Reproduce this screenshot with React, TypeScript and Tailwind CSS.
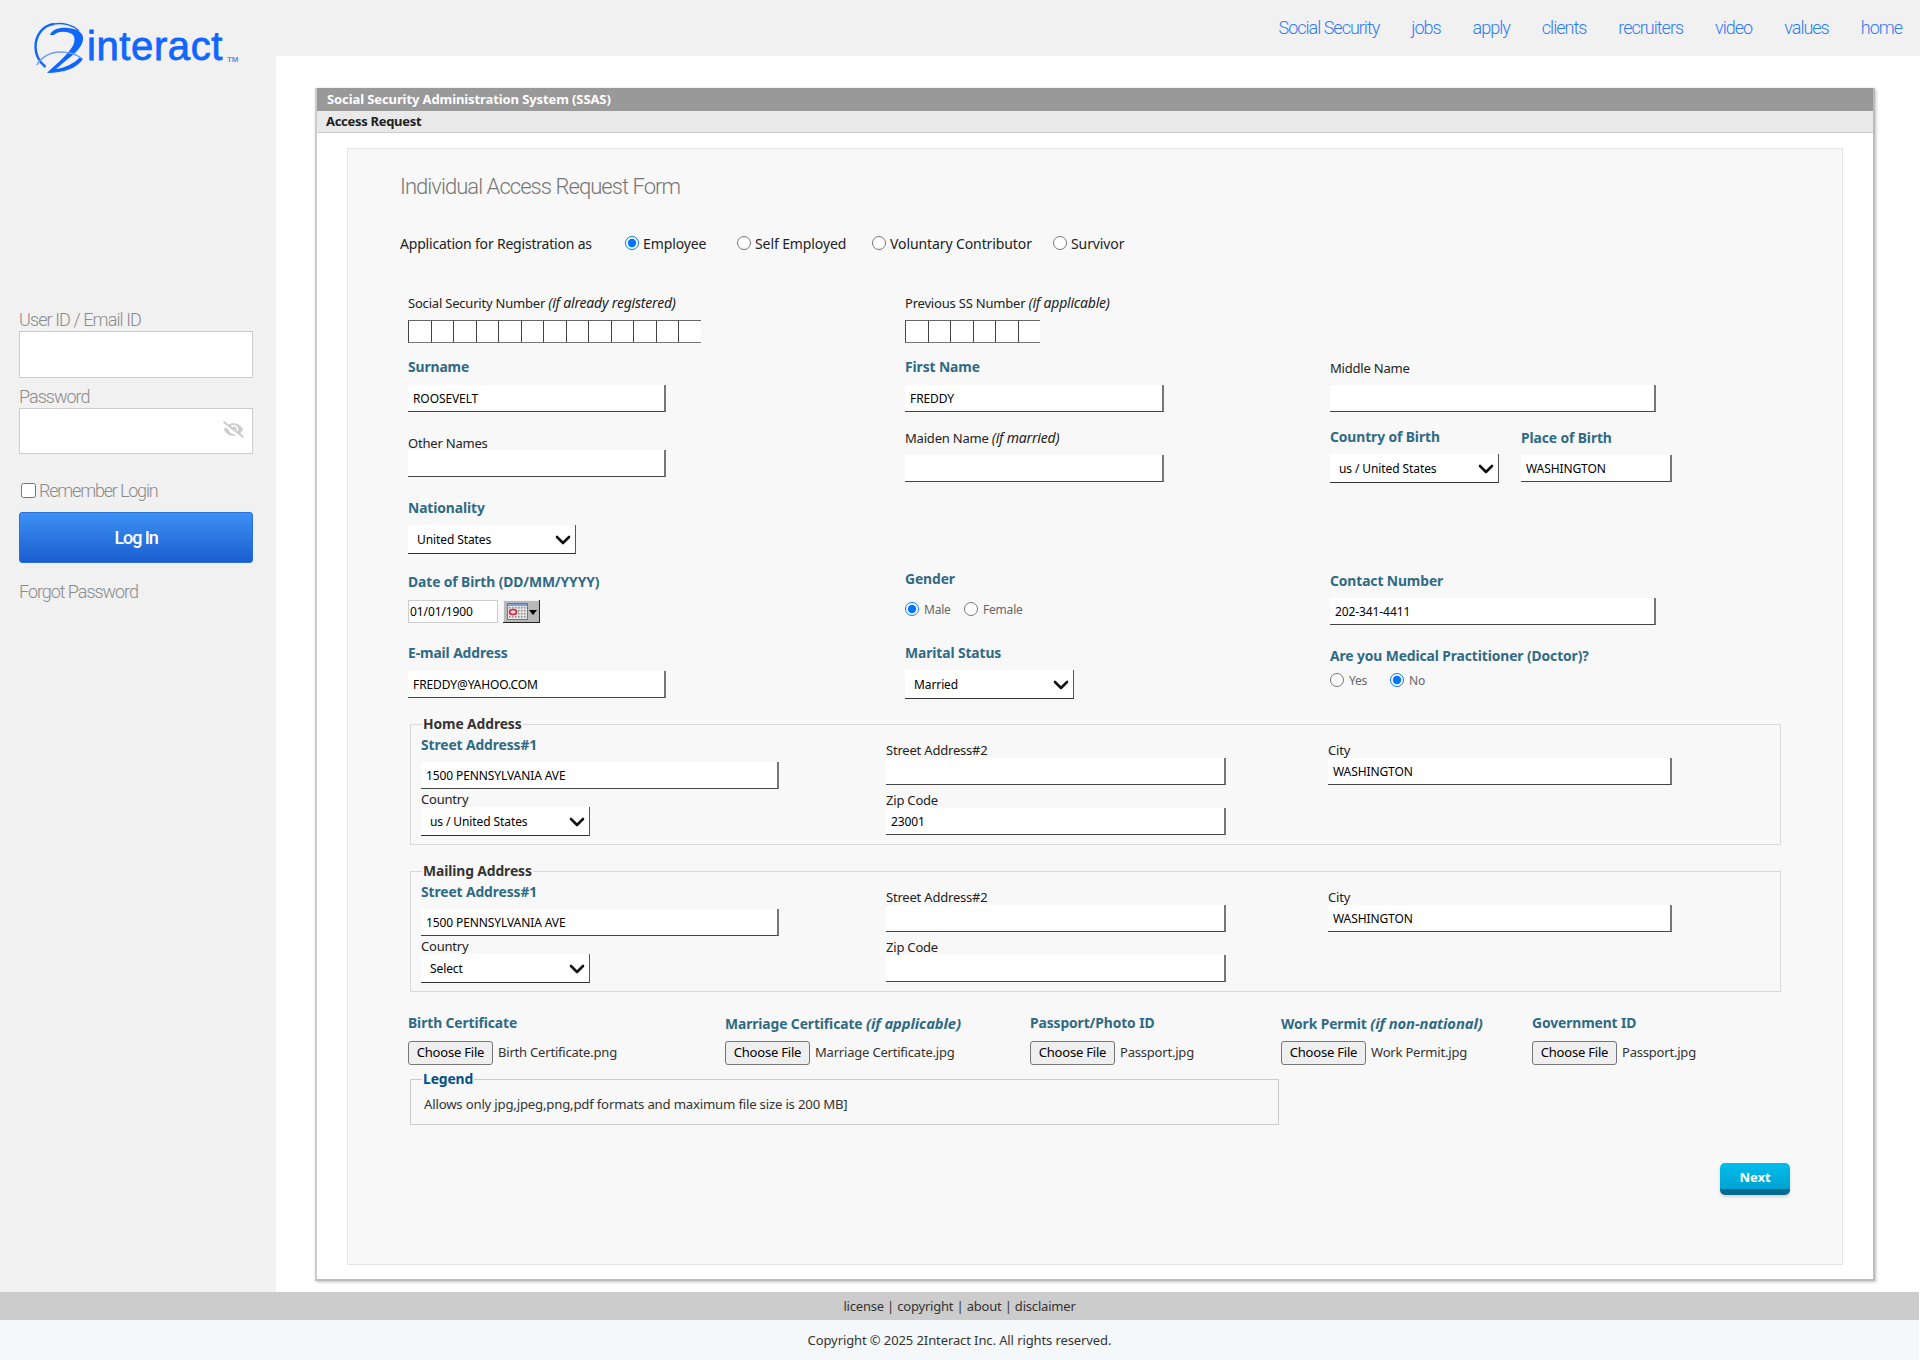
import type { ReactNode } from "react";
import { ChevronDown } from "lucide-react";
import { FaEyeSlash } from "react-icons/fa";

const sans = "font-['Noto_Sans','Liberation_Sans',sans-serif]";
const thin = "font-['Roboto','Liberation_Sans',sans-serif]";

const navItems = ["Social Security", "jobs", "apply", "clients", "recruiters", "video", "values", "home"];

function Label({ children, strong, className = "" }: { children: ReactNode; strong?: boolean; className?: string }) {
  return (
    <div
      className={`h-[16px] whitespace-nowrap ${
        strong
          ? "text-[13.85px] leading-[16px] font-bold tracking-[-0.1px] text-[#2f6a84]"
          : "text-[13px] leading-[18px] tracking-[-0.2px] text-[#222]"
      } ${className}`}
    >
      {children}
    </div>
  );
}

function TextBox({ width, value = "", className = "" }: { width: string; value?: string; className?: string }) {
  return (
    <input
      type="text"
      defaultValue={value}
      className={`block h-[27px] ${width} border-r-2 border-b border-r-[#777] border-b-[#444] bg-white px-[5px] text-[12px] tracking-[-0.1px] text-black outline-none ${className}`}
    />
  );
}

function Picker({ width, value, options, className = "" }: { width: string; value: string; options?: string[]; className?: string }) {
  return (
    <div className={`relative ${width} ${className}`}>
      <select
        defaultValue={value}
        className="block h-[29px] w-full appearance-none border-r border-b border-r-[#555] border-b-[#333] bg-white pt-px pl-[9px] text-[12px] tracking-[-0.1px] text-black outline-none"
      >
        {(options ?? [value]).map((o) => (
          <option key={o}>{o}</option>
        ))}
      </select>
      <ChevronDown size={24} strokeWidth={2.6} className="pointer-events-none absolute top-[3px] right-[1px] text-[#111]" />
    </div>
  );
}

function Radio({ name, label, checked, className = "", small }: { name: string; label: string; checked?: boolean; className?: string; small?: boolean }) {
  return (
    <label className={`flex items-center ${small ? "gap-[5px]" : "gap-[4px]"} ${className}`}>
      <input type="radio" name={name} defaultChecked={checked} className="m-0 h-[14px] w-[14px]" />
      <span className={small ? "pt-[2px]" : ""}>{label}</span>
    </label>
  );
}

function Boxes({ count }: { count: number }) {
  return (
    <div className="flex h-[23px]">
      {Array.from({ length: count }).map((_, i) => (
        <input
          key={i}
          maxLength={1}
          className="h-[23px] w-[22.5px] border-t border-b border-l border-t-[#666] border-b-[#777] border-l-[#444] bg-white outline-none"
        />
      ))}
    </div>
  );
}

function CalendarIcon() {
  return (
    <svg width="37" height="23" viewBox="0 0 37 23" className="ml-[5px] block">
      <rect x="0" y="0" width="37" height="23" fill="#b8b8b8" />
      <path d="M0 0h36v1H1v21H0z" fill="#f0f0f0" />
      <path d="M36 0h1v23H0v-1h36z" fill="#222" />
      <rect x="4.500" y="3.500" width="20" height="16" fill="#e2e2e2" stroke="#757575" />
      <rect x="5" y="4" width="19" height="2" fill="#7f9ed6" />
      <g fill="#8d8d8d">
        {[7, 10, 13, 16, 19, 22].map((x) =>
          [8, 11, 14, 17].map((y) => <rect key={`${x}-${y}`} x={x - 1} y={y - 1} width="1.500" height="1.500" />),
        )}
      </g>
      <ellipse cx="10" cy="12" rx="3.500" ry="2.500" fill="#f7d7da" stroke="#e2203a" strokeWidth="1.500" />
      <path d="M26 10h8l-4 5z" fill="#000" />
    </svg>
  );
}

function Logo() {
  return (
    <div className="flex h-[56px] items-start pt-[18px] pl-[30px]">
      <svg width="60" height="60" viewBox="0 0 60 60" className="shrink-0">
        <path d="M24 6C12 7.500 5.500 18 5.500 29c0 9 4 15 10 20" fill="none" stroke="#1166ff" strokeWidth="2.400" />
        <path d="M24 6c9-1.500 19 1 25 7" fill="none" stroke="#1166ff" strokeWidth="1.400" />
        <path
          d="M20 17C22 11 30 9 38 10 48 11 54 15 53 22 52 30 42 38 33 45 30 48 27 50 26 51 34 50 44 46 50 39L53 41C47 50 34 55 17 55 24 48 34 40 40 32 46 25 46 17 40 15 34 13 28 13 24 17Z"
          fill="#1166ff"
        />
        <path d="M7 47c3-7 13-13 23-13 9 0 16 2 21 6" fill="none" stroke="#6a9cff" strokeWidth="1.600" />
      </svg>
      <span className="-ml-[3px] mt-[8px] text-[40px] leading-[40px] tracking-[0.6px] text-[#1166ff] [-webkit-text-stroke:0.8px_#1166ff] font-['Liberation_Sans',sans-serif]">
        interact
      </span>
      <span className="mt-[38px] ml-[4px] text-[8px] leading-[8px] font-bold text-[#5b8fe8] font-['Liberation_Sans',sans-serif]">TM</span>
    </div>
  );
}

function Sidebar() {
  return (
    <aside className={`w-[276px] shrink-0 bg-[#f1f1f1] px-[19px] text-[#8b8b8b] ${thin}`}>
      <div className="-mx-[19px] h-[310px]">
        <Logo />
      </div>
      <div className="h-[20px] text-[18px] leading-[20px] font-light tracking-[-0.9px]">User ID / Email ID</div>
      <input type="text" className="mt-[1px] block h-[47px] w-[234px] border border-[#ccc] bg-white outline-none" />
      <div className="mt-[9px] h-[20px] text-[18px] leading-[20px] font-light tracking-[-1px]">Password</div>
      <div className="relative mt-[1px] w-[234px]">
        <input type="password" className="block h-[46px] w-full border border-[#ccc] bg-white outline-none" />
        <FaEyeSlash className="absolute top-[11px] right-[9px] text-[21px] text-[#cccccc]" />
      </div>
      <label className="mt-[26px] flex h-[20px] items-center gap-[3px] pl-[2px] text-[18px] font-light tracking-[-1.2px]">
        <input type="checkbox" className="m-0 h-[15px] w-[15px]" />
        Remember Login
      </label>
      <button
        type="button"
        className="mt-[12px] h-[51px] w-[234px] rounded-[3px] border border-[#2a6fdc] bg-gradient-to-b from-[#3d90f4] to-[#1b5ecf] text-[18px] font-medium tracking-[-1.100px] text-white"
      >
        Log In
      </button>
      <div className="mt-[19px] h-[20px] text-[18px] leading-[20px] font-light tracking-[-1.050px]">Forgot Password</div>
    </aside>
  );
}

function AddressBlock({
  title,
  street,
  country,
  zip,
  city,
  options,
  className = "",
}: {
  title: string;
  street: string;
  country: string;
  zip: string;
  city: string;
  options: string[];
  className?: string;
}) {
  return (
    <fieldset className={`ml-[2px] h-[129px] w-[1371px] border border-[#d9d9d9] ${className}`}>
      <legend className="ml-[11px] h-[16px] px-px text-[13.85px] leading-[16px] font-bold tracking-[-0.1px] text-[#333]">{title}</legend>
      <div className="grid grid-cols-[465px_442px_1fr] pl-[10px]">
        <div className="pt-[5px]">
          <Label strong>Street Address#1</Label>
          <TextBox width="w-[358px]" value={street} className="mt-[9px]" />
          <Label className="mt-[1px]">Country</Label>
          <Picker width="w-[169px]" value={country} options={options} className="mt-[1px]" />
        </div>
        <div className="pt-[9px]">
          <Label>Street Address#2</Label>
          <TextBox width="w-[340px]" className="mt-[1px]" />
          <Label className="mt-[6px]">Zip Code</Label>
          <TextBox width="w-[340px]" value={zip} className="mt-[1px]" />
        </div>
        <div className="pt-[9px]">
          <Label>City</Label>
          <TextBox width="w-[344px]" value={city} className="mt-[1px]" />
        </div>
      </div>
    </fieldset>
  );
}

function FileField({ label, note, file }: { label: string; note?: string; file: string }) {
  return (
    <div>
      <Label strong>
        {label} {note && <i className="text-[14.8px]">{note}</i>}
      </Label>
      <div className="mt-[10px] flex h-[24px] items-center text-[13px] tracking-[-0.2px] text-[#333]">
        <button
          type="button"
          className="mr-[5px] h-[24px] w-[85px] shrink-0 rounded-[3px] border border-[#767676] bg-[#efefef] text-[13px] text-black"
        >
          Choose File
        </button>
        <span className="whitespace-nowrap">{file}</span>
      </div>
    </div>
  );
}

function RequestForm() {
  return (
    <div className={`h-[1117px] border border-[#e5e5e5] bg-[#f8f8f8] pl-[60px] text-[#222] ${sans}`}>
      <h1 className={`-ml-[8px] mt-[23px] h-[30px] text-[22px] leading-[30px] font-light tracking-[-0.95px] text-[#777] ${thin}`}>
        Individual Access Request Form
      </h1>

      <div className="-ml-[8px] mt-[31px] flex h-[20px] items-center text-[14px] tracking-[-0.1px] text-[#222]">
        <span className="w-[225px] tracking-[-0.2px]">Application for Registration as</span>
        <Radio name="regType" label="Employee" checked className="w-[112px]" />
        <Radio name="regType" label="Self Employed" className="w-[135px]" />
        <Radio name="regType" label="Voluntary Contributor" className="w-[181px]" />
        <Radio name="regType" label="Survivor" />
      </div>

      <div className="mt-[41px] grid grid-cols-[497px_1fr]">
        <div>
          <Label>
            Social Security Number <i className="text-[14px]">(if already registered)</i>
          </Label>
          <div className="mt-[10px]"><Boxes count={13} /></div>
        </div>
        <div>
          <Label>
            Previous SS Number <i className="text-[14px]">(if applicable)</i>
          </Label>
          <div className="mt-[10px]"><Boxes count={6} /></div>
        </div>
      </div>

      <div className="mt-[16px] grid grid-cols-[497px_425px_1fr]">
        <div>
          <Label strong>Surname</Label>
          <TextBox width="w-[258px]" value="ROOSEVELT" className="mt-[10px]" />
        </div>
        <div>
          <Label strong>First Name</Label>
          <TextBox width="w-[259px]" value="FREDDY" className="mt-[10px]" />
        </div>
        <div>
          <Label>Middle Name</Label>
          <TextBox width="w-[326px]" className="mt-[10px]" />
        </div>
      </div>

      <div className="grid h-[71px] grid-cols-[497px_425px_1fr]">
        <div className="pt-[22px]">
          <Label>Other Names</Label>
          <TextBox width="w-[258px]" />
        </div>
        <div className="pt-[17px]">
          <Label>
            Maiden Name <i className="text-[14px]">(if married)</i>
          </Label>
          <TextBox width="w-[259px]" className="mt-[10px]" />
        </div>
        <div className="flex pt-[17px]">
          <div className="w-[191px]">
            <Label strong>Country of Birth</Label>
            <Picker width="w-[169px]" value="us / United States" className="mt-[9px]" />
          </div>
          <div className="pt-px">
            <Label strong>Place of Birth</Label>
            <TextBox width="w-[151px]" value="WASHINGTON" className="mt-[9px]" />
          </div>
        </div>
      </div>

      <div className="mt-[17px]">
        <Label strong>Nationality</Label>
        <Picker width="w-[168px]" value="United States" className="mt-[9px]" />
      </div>

      <div className="mt-[17px] grid h-[55px] grid-cols-[497px_425px_1fr]">
        <div className="pt-[3px]">
          <Label strong>
            Date of Birth <span>(DD/MM/YYYY)</span>
          </Label>
          <div className="mt-[10px] flex items-start">
            <input
              type="text"
              defaultValue="01/01/1900"
              className="h-[23px] w-[90px] border border-[#ccc] bg-white px-[1px] text-[12px] tracking-[-0.1px] text-black outline-none"
            />
            <CalendarIcon />
          </div>
        </div>
        <div>
          <Label strong>Gender</Label>
          <div className="mt-[15px] flex h-[14px] items-center text-[12px] tracking-[-0.2px] text-[#666]">
            <Radio small name="gender" label="Male" checked className="w-[59px]" />
            <Radio small name="gender" label="Female" />
          </div>
        </div>
        <div className="pt-[2px]">
          <Label strong>Contact Number</Label>
          <TextBox width="w-[326px]" value="202-341-4411" className="mt-[9px]" />
        </div>
      </div>

      <div className="mt-[19px] grid h-[54px] grid-cols-[497px_425px_1fr]">
        <div>
          <Label strong>E-mail Address</Label>
          <TextBox width="w-[258px]" value="FREDDY@YAHOO.COM" className="mt-[10px]" />
        </div>
        <div>
          <Label strong>Marital Status</Label>
          <Picker width="w-[169px]" value="Married" className="mt-[9px]" />
        </div>
        <div className="pt-[3px]">
          <Label strong>Are you Medical Practitioner (Doctor)?</Label>
          <div className="mt-[9px] flex h-[14px] items-center text-[12px] tracking-[-0.2px] text-[#666]">
            <Radio small name="doctor" label="Yes" className="w-[60px]" />
            <Radio small name="doctor" label="No" checked />
          </div>
        </div>
      </div>

      <AddressBlock
        title="Home Address"
        street="1500 PENNSYLVANIA AVE"
        country="us / United States"
        zip="23001"
        city="WASHINGTON"
        options={["Select", "us / United States"]}
        className="mt-[17px]"
      />
      <AddressBlock
        title="Mailing Address"
        street="1500 PENNSYLVANIA AVE"
        country="Select"
        zip=""
        city="WASHINGTON"
        options={["Select", "us / United States"]}
        className="mt-[18px]"
      />

      <div className="mt-[23px] grid grid-cols-[317px_305px_251px_251px_1fr]">
        <FileField label="Birth Certificate" file="Birth Certificate.png" />
        <FileField label="Marriage Certificate" note="(if applicable)" file="Marriage Certificate.jpg" />
        <FileField label="Passport/Photo ID" file="Passport.jpg" />
        <FileField label="Work Permit" note="(if non-national)" file="Work Permit.jpg" />
        <FileField label="Government ID" file="Passport.jpg" />
      </div>

      <fieldset className="mt-[6px] ml-[2px] h-[54px] w-[869px] border border-[#ccc]">
        <legend className="ml-[11px] h-[16px] px-px text-[13.85px] leading-[16px] font-bold tracking-[-0.1px] text-[#00508b]">Legend</legend>
        <p className="pt-[9px] pl-[13px] text-[13.2px] leading-[16px] tracking-[-0.2px] text-[#333]">
          Allows only jpg,jpeg,png,pdf formats and maximum file size is 200 MB]
        </p>
      </fieldset>

      <div className="mt-[38px] flex justify-end pr-[52px]">
        <button
          type="button"
          className="h-[32px] w-[70px] rounded-[5px] border-b-[6px] border-b-[#006a8f] bg-gradient-to-b from-[#00bdec] to-[#00a3d1] pt-[3px] text-[13px] font-bold text-white shadow-[0_2px_3px_rgba(0,0,0,0.15)]"
        >
          Next
        </button>
      </div>
    </div>
  );
}

export default function App() {
  return (
    <div className="flex h-[1360px] flex-col bg-white">
      <div className="flex h-[1292px]">
        <Sidebar />
        <main className="flex-1">
          <nav className={`flex h-[56px] items-center justify-end gap-[32px] bg-[#f1f1f1] pr-[18px] pb-[1px] text-[18px] font-light tracking-[-1px] text-[#2f7bf5] ${thin}`}>
            {navItems.map((item) => (
              <a key={item} href="#">
                {item}
              </a>
            ))}
          </nav>
          <div className="mt-[32px] ml-[39px] w-[1560px] border-r-2 border-b-2 border-l-2 border-r-[#bbb] border-b-[#bbb] border-l-[#ccc] shadow-[1px_1px_3px_rgba(0,0,0,0.25)]">
            <div className={`flex h-[23px] items-center bg-[#999] pl-[10px] text-[13px] font-bold tracking-[-0.1px] text-white ${sans}`}>
              Social Security Administration System (SSAS)
            </div>
            <div className={`flex h-[22px] items-center border-b border-b-[#ccc] bg-[#e9e9e9] pl-[9px] text-[13px] font-bold tracking-[-0.3px] text-[#222] ${sans}`}>
              Access Request
            </div>
            <div className="px-[30px] pt-[15px] pb-[14px]">
              <RequestForm />
            </div>
          </div>
        </main>
      </div>
      <footer className={`text-[#333] ${sans}`}>
        <div className="mr-px flex h-[28px] items-center justify-center bg-[#ccc] pt-px text-[13px] tracking-[-0.2px]">
          license | copyright | about | disclaimer
        </div>
        <div className="mr-px flex h-[40px] items-center justify-center bg-[#f4f8fb] pt-[2px] text-[13px] tracking-[-0.1px]">
          Copyright © 2025 2Interact Inc. All rights reserved.
        </div>
      </footer>
    </div>
  );
}
